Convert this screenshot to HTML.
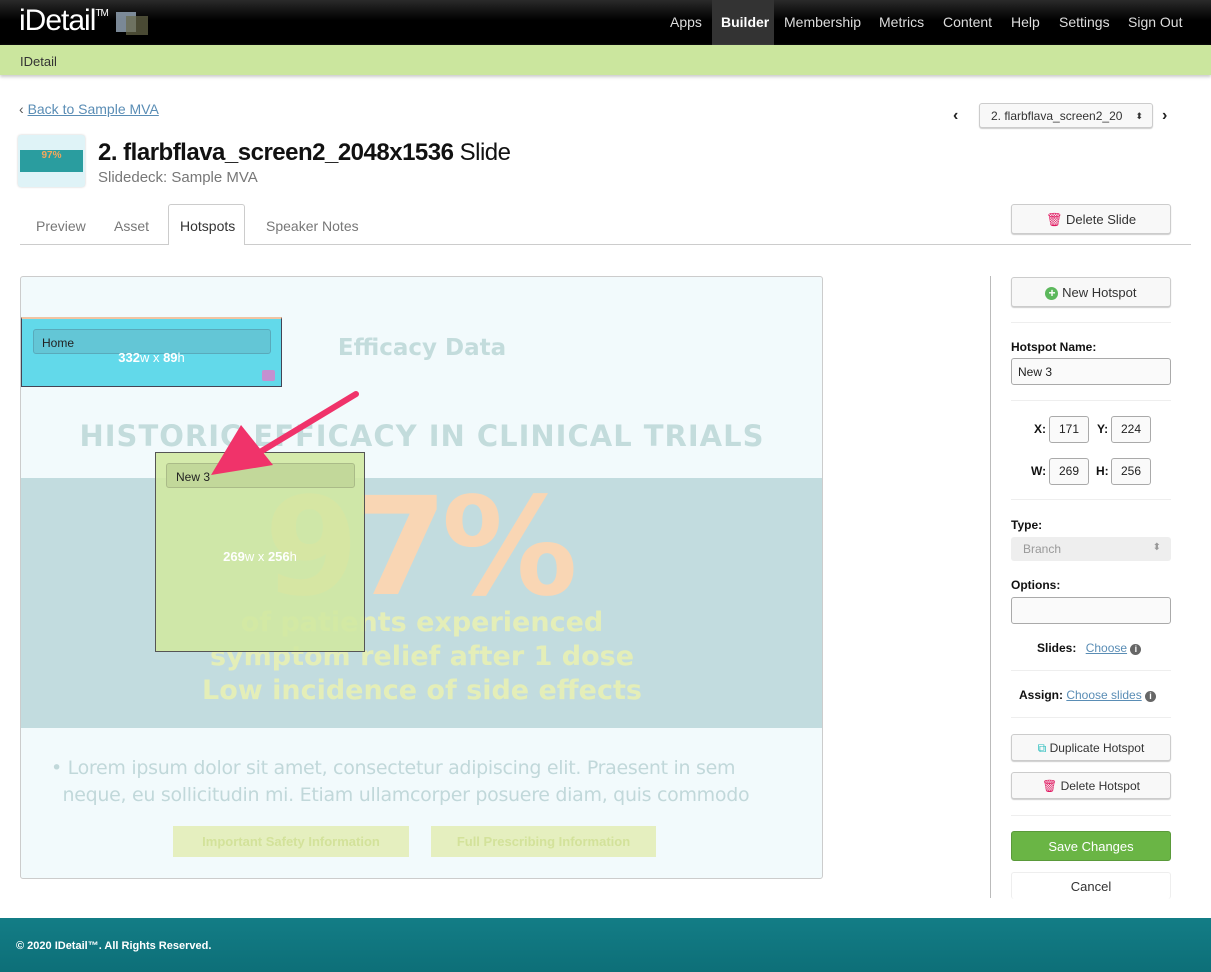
<!DOCTYPE html>
<html><head><style>
*{margin:0;padding:0;box-sizing:border-box}
body{width:1211px;height:972px;position:relative;font-family:"Liberation Sans",sans-serif;background:#fff;overflow:hidden;color:#222}
.a{position:absolute}
.nav{left:0;top:0;width:1211px;height:45px;background:linear-gradient(#2a2a2a,#000 45%)}
.nav span{position:absolute;top:14px;color:#ddd;font-size:14px}
.btn{position:absolute;border:1px solid #ccc;border-radius:3px;background:#f8f8f8;box-shadow:0 1px 1px #ccc;font-size:12px;text-align:center;color:#333}
.lbl{font-size:12px;font-weight:bold;color:#111}
.inp{position:absolute;border:1px solid #aaa;border-radius:3px;background:#fafafa;font-size:12px;text-align:center}
.hr{position:absolute;left:1011px;width:160px;height:1px;background:#eee}
.sl{font-family:"DejaVu Sans",sans-serif;font-weight:bold;position:absolute;text-align:center;width:802px;left:0}
</style></head><body>
<div class="a nav"></div>
<div class="a" style="left:19px;top:4px;color:#fff;font-size:30px;letter-spacing:-1px">iDetail<sup style="font-size:10px;vertical-align:top;position:relative;top:4px">TM</sup></div>
<div class="a" style="left:116px;top:12px;width:20px;height:20px;background:#9ab;opacity:.8"></div>
<div class="a" style="left:126px;top:16px;width:22px;height:19px;background:#6a6a4a;opacity:.7"></div>
<div class="a" style="left:712px;top:0;width:62px;height:45px;background:#333"></div>
<div class="nav a" style="background:none">
<span style="left:670px">Apps</span><span style="left:721px;color:#fff;font-weight:bold">Builder</span><span style="left:784px">Membership</span><span style="left:879px">Metrics</span><span style="left:943px">Content</span><span style="left:1011px">Help</span><span style="left:1059px">Settings</span><span style="left:1128px">Sign Out</span></div>
<div class="a" style="left:0;top:45px;width:1211px;height:30px;background:#cbe69e;box-shadow:0 2px 3px #ccc"></div>
<div class="a" style="left:20px;top:54px;font-size:13px;color:#333">IDetail</div>
<div class="a" style="left:19px;top:101px;font-size:14px;color:#555">‹ <u style="color:#5a8db5">Back to Sample MVA</u></div>
<div class="a" style="left:18px;top:135px;width:67px;height:52px;background:#dff3f7;border-radius:3px;box-shadow:0 0 2px #ccc"><div style="margin:15px 2px 0;height:22px;background:#2a9d9f;color:#f6a75c;font-size:10px;font-weight:bold;text-align:center">97%</div></div>
<div class="a" style="left:98px;top:139px;font-size:24px;font-weight:bold;color:#111;letter-spacing:-.5px">2. flarbflava_screen2_2048x1536 <span style="font-weight:normal">Slide</span></div>
<div class="a" style="left:98px;top:169px;font-size:15px;color:#777">Slidedeck: Sample MVA</div>
<div class="a" style="left:953px;top:107px;font-size:16px;font-weight:bold">‹</div>
<div class="btn" style="left:979px;top:103px;width:174px;height:25px;line-height:24px;text-align:left;padding-left:11px">2. flarbflava_screen2_20 <span style="position:absolute;right:9px;font-size:9px">⬍</span></div>
<div class="a" style="left:1162px;top:107px;font-size:16px;font-weight:bold">›</div>
<div class="a" style="left:20px;top:244px;width:1171px;height:1px;background:#ccc"></div>
<div class="a" style="left:168px;top:204px;width:77px;height:41px;border:1px solid #ccc;border-bottom:none;background:#fff;border-radius:3px 3px 0 0"></div>
<div class="a" style="left:36px;top:218px;font-size:14px;color:#777">Preview</div>
<div class="a" style="left:114px;top:218px;font-size:14px;color:#777">Asset</div>
<div class="a" style="left:180px;top:218px;font-size:14px;color:#333">Hotspots</div>
<div class="a" style="left:266px;top:218px;font-size:14px;color:#777">Speaker Notes</div>
<div class="btn" style="left:1011px;top:204px;width:160px;height:30px;line-height:29px;font-size:13px"><span style="color:#e0155e">🗑</span> Delete Slide</div>
<!-- slide -->
<div class="a" style="left:20px;top:276px;width:803px;height:603px;border:1px solid #ccc;border-radius:3px;background:#f2fafc;overflow:hidden">
<div class="a" style="left:0;top:201px;width:802px;height:250px;background:#c2dcdf"></div>
<div class="sl" style="top:58px;font-size:23px;color:#c3dcdc;left:0">Efficacy Data</div>
<div class="sl" style="top:142px;font-size:29px;color:#c3dcdc;letter-spacing:1px">HISTORIC EFFICACY IN CLINICAL TRIALS</div>
<div class="sl" style="top:192px;font-size:136px;color:#f9d6b4;letter-spacing:-6px;left:-4px">97%</div>
<div class="sl" style="top:329px;font-size:27px;color:#e4eeb8;line-height:34px">of patients experienced<br>symptom relief after 1 dose<br>Low incidence of side effects</div>
<div class="a" style="left:30px;top:478px;font-size:19px;color:#c1d8da;line-height:27px;font-family:'DejaVu Sans',sans-serif;white-space:nowrap;letter-spacing:-.3px">• Lorem ipsum dolor sit amet, consectetur adipiscing elit. Praesent in sem<br>&nbsp;&nbsp;neque, eu sollicitudin mi. Etiam ullamcorper posuere diam, quis commodo</div>
<div class="a" style="left:152px;top:549px;width:236px;height:31px;background:#e5efbf;color:#d3e29a;font-size:13px;font-weight:bold;text-align:center;line-height:31px">Important Safety Information</div>
<div class="a" style="left:410px;top:549px;width:225px;height:31px;background:#e5efbf;color:#d3e29a;font-size:13px;font-weight:bold;text-align:center;line-height:31px">Full Prescribing Information</div>
<div class="a" style="left:0;top:40px;width:261px;height:70px;background:#62d9ea;border:1px solid #445;border-top:2px solid #f1c4a2">
<div class="a" style="left:11px;top:10px;width:238px;height:25px;border:1px solid #59aabb;border-radius:3px;background:#63c6d6;font-size:12px;padding:6px 8px">Home</div>
<div class="a" style="left:0;top:31px;width:259px;text-align:center;color:#fff;font-size:13px;font-weight:bold">332<span style="font-weight:normal">w x </span>89<span style="font-weight:normal">h</span></div>
<div class="a" style="left:240px;top:51px;width:13px;height:11px;background:#c490d0;border-radius:2px"></div></div>
<div class="a" style="left:134px;top:175px;width:210px;height:200px;background:rgba(208,232,160,.88);border:1px solid #555">
<div class="a" style="left:10px;top:10px;width:189px;height:25px;border:1px solid #aabb88;border-radius:3px;background:#c2d89a;font-size:12px;padding:6px 9px">New 3</div>
<div class="a" style="left:0;top:96px;width:208px;text-align:center;color:#fff;font-size:13px;font-weight:bold">269<span style="font-weight:normal">w x </span>256<span style="font-weight:normal">h</span></div></div>
<svg class="a" style="left:0;top:0" width="802" height="603"><path d="M335 117 L234 178" stroke="#f0336a" stroke-width="6" stroke-linecap="round"/><path d="M190 198 L220 148 L252 188 Z" fill="#f0336a"/></svg>
</div>
<!-- right -->
<div class="a" style="left:990px;top:276px;width:1px;height:622px;background:#bbb"></div>
<div class="btn" style="left:1011px;top:277px;width:160px;height:30px;line-height:29px;font-size:13px"><span style="color:#fff;background:#5cb85c;border-radius:50%;display:inline-block;width:13px;height:13px;line-height:13px;font-size:12px;font-weight:bold">+</span> New Hotspot</div>
<div class="hr" style="top:322px"></div>
<div class="a lbl" style="left:1011px;top:340px">Hotspot Name:</div>
<div class="inp" style="left:1011px;top:358px;width:160px;height:27px;text-align:left;padding:6px 6px">New 3</div>
<div class="hr" style="top:400px"></div>
<div class="a lbl" style="left:1034px;top:422px">X:</div><div class="inp" style="left:1049px;top:416px;width:40px;height:27px;line-height:25px">171</div>
<div class="a lbl" style="left:1097px;top:422px">Y:</div><div class="inp" style="left:1111px;top:416px;width:40px;height:27px;line-height:25px">224</div>
<div class="a lbl" style="left:1031px;top:464px">W:</div><div class="inp" style="left:1049px;top:458px;width:40px;height:27px;line-height:25px">269</div>
<div class="a lbl" style="left:1096px;top:464px">H:</div><div class="inp" style="left:1111px;top:458px;width:40px;height:27px;line-height:25px">256</div>
<div class="hr" style="top:499px"></div>
<div class="a lbl" style="left:1011px;top:518px">Type:</div>
<div class="a" style="left:1011px;top:537px;width:160px;height:24px;background:#eee;border-radius:3px;font-size:12px;color:#999;padding:5px 12px">Branch<span style="position:absolute;right:10px;font-size:10px">⬍</span></div>
<div class="a lbl" style="left:1011px;top:578px">Options:</div>
<div class="inp" style="left:1011px;top:597px;width:160px;height:27px"></div>
<div class="a lbl" style="left:1037px;top:641px">Slides: <span style="font-weight:normal;color:#5a8db5;text-decoration:underline;margin-left:6px">Choose</span> <span style="background:#666;color:#fff;border-radius:50%;display:inline-block;width:11px;height:11px;font-size:9px;text-align:center;line-height:11px">i</span></div>
<div class="hr" style="top:670px"></div>
<div class="a lbl" style="left:1019px;top:688px">Assign: <span style="font-weight:normal;color:#5a8db5;text-decoration:underline">Choose slides</span> <span style="background:#666;color:#fff;border-radius:50%;display:inline-block;width:11px;height:11px;font-size:9px;text-align:center;line-height:11px">i</span></div>
<div class="hr" style="top:717px"></div>
<div class="btn" style="left:1011px;top:734px;width:160px;height:27px;line-height:26px"><span style="color:#2bb">⧉</span> Duplicate Hotspot</div>
<div class="btn" style="left:1011px;top:772px;width:160px;height:27px;line-height:26px"><span style="color:#e0155e">🗑</span> Delete Hotspot</div>
<div class="hr" style="top:815px"></div>
<div class="a" style="left:1011px;top:831px;width:160px;height:30px;background:#6ab545;border:1px solid #5a9a3a;border-radius:3px;color:#fff;font-size:13px;text-align:center;line-height:29px">Save Changes</div>
<div class="a" style="left:1011px;top:872px;width:160px;height:27px;border:1px solid #eee;border-bottom:none;border-radius:3px;font-size:13px;text-align:center;line-height:28px;color:#333">Cancel</div>
<div class="a" style="left:0;top:918px;width:1211px;height:54px;background:linear-gradient(#137d86,#0d6f78)"></div>
<div class="a" style="left:16px;top:940px;color:#fff;font-size:11px;font-weight:bold">© 2020 IDetail™.  All Rights Reserved.</div>
</body></html>
